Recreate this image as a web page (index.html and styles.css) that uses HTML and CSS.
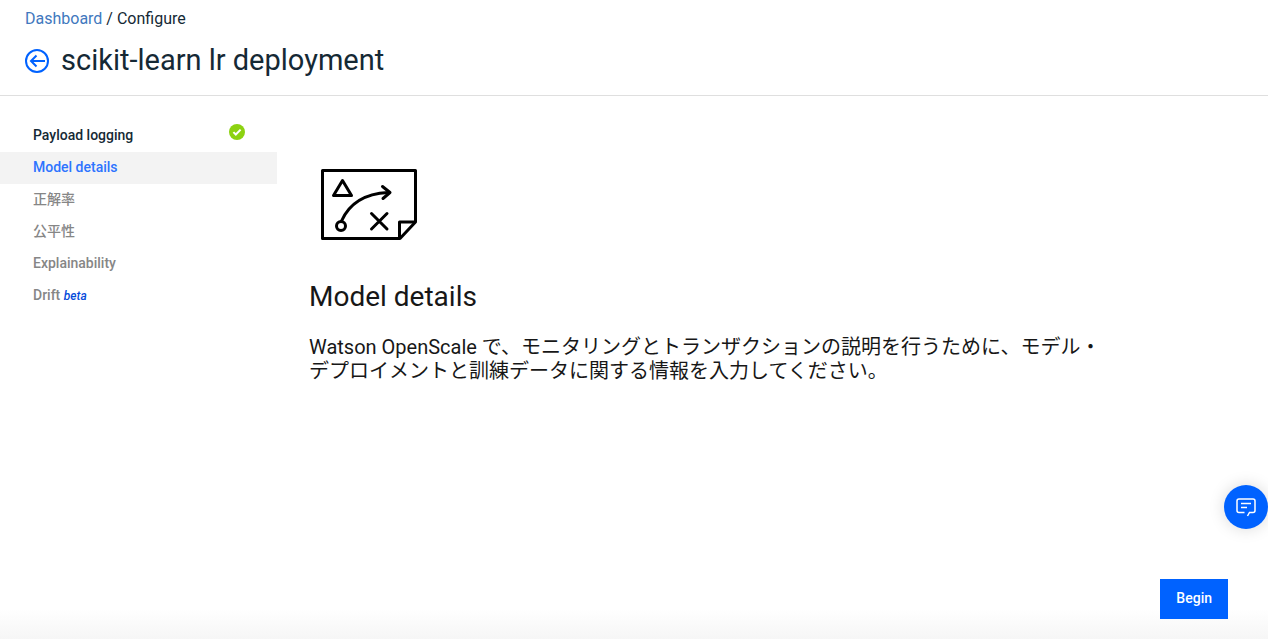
FILE: index.html
```html
<!DOCTYPE html>
<html lang="ja">
<head>
    <meta charset="UTF-8">
    <meta name="viewport" content="width=device-width, initial-scale=1.0">
    <link rel="stylesheet" href="styles.css">
    <title>Configure</title>
</head>
<body>
    <header class="page-header">
        <nav class="breadcrumb" aria-label="Breadcrumb">
            <a href="#">Dashboard</a> / <span>Configure</span>
        </nav>
        <div class="title-row">
            <a href="#" class="back" aria-label="Back">
                <svg width="24" height="24" viewBox="0 0 24 24" fill="none" stroke="#0062ff" stroke-width="2">
                    <circle cx="12" cy="12" r="11"/>
                    <path d="M20 12H6M11.5 6.5L6 12l5.5 5.5"/>
                </svg>
            </a>
            <h1>scikit-learn lr deployment</h1>
        </div>
    </header>

    <div class="content">
        <!-- Configuration steps -->
        <nav class="steps" aria-label="Steps">
            <ul>
                <li class="done">
                    <a href="#">Payload logging</a>
                    <svg class="check" width="16" height="16" viewBox="0 0 16 16">
                        <circle cx="8" cy="8" r="8" fill="#8cd211"/>
                        <path d="M4.4 8.1l2.4 2.4 4.8-4.9" fill="none" stroke="#fff" stroke-width="2"/>
                    </svg>
                </li>
                <li class="active"><a href="#">Model details</a></li>
                <li><a href="#">正解率</a></li>
                <li><a href="#">公平性</a></li>
                <li><a href="#">Explainability</a></li>
                <li><a href="#">Drift <em>beta</em></a></li>
            </ul>
        </nav>

        <main class="details">
            <svg class="plan" width="96" height="72" viewBox="0 0 96 72" fill="none" stroke="#000" stroke-width="3" stroke-linejoin="round">
                <path d="M1.5 1.5h93V53L79 69.500H1.500z"/>
                <path d="M94.500 53H78.500v16.500"/>
                <path d="M21.500 11.500l-9 15h18z"/>
                <circle cx="20" cy="57" r="4.500"/>
                <path d="M20.500 52C29 33 46 24.500 67 23.500" stroke-linecap="round"/>
                <path d="M61.500 17.500l7.500 6-7 6" stroke-linecap="round"/>
                <path d="M50.500 44.500l15.500 15.500M66 44.500L50.500 60" stroke-linecap="round"/>
            </svg>
            <h2>Model details</h2>
            <p>Watson OpenScale で、モニタリングとトランザクションの説明を行うために、モデル・デプロイメントと訓練データに関する情報を入力してください。</p>
        </main>
    </div>

    <footer class="actions">
        <button type="button" class="begin">Begin</button>
    </footer>

    <button type="button" class="chat" aria-label="Chat">
        <svg width="20" height="20" viewBox="0 0 20 20" fill="none" stroke="#fff" stroke-width="1.500">
            <path d="M8.500 15.500H3a2 2 0 0 1-2-2V4a2 2 0 0 1 2-2h14a2 2 0 0 1 2 2v9.500a2 2 0 0 1-2 2h-3.500L11.500 19"/>
            <path d="M5 6.500h10M5 10.500h6"/>
        </svg>
    </button>
</body>
</html>
```
FILE: styles.css
```css
* {
    box-sizing: border-box;
}

body {
    display: flex;
    flex-direction: column;
    min-height: 100vh;
    margin: 0;
    font-family: Roboto, "Noto Sans CJK JP", sans-serif;
    color: #152935;
    background-color: #fff;
}

a {
    color: inherit;
    text-decoration: none;
}

.page-header {
    padding: 9px 25px 17px;
    border-bottom: 1px solid #dfdfdf;
}

.breadcrumb {
    font-size: 16px;
    line-height: 20px;
}

.breadcrumb a {
    color: #4178be;
}

.title-row {
    display: flex;
    align-items: center;
    gap: 12px;
    margin-top: 13px;
}

.back {
    height: 24px;
    margin-top: 2px;
}

h1, h2 {
    margin: 0;
    font-weight: 400;
    line-height: 36px;
}

h1 {
    font-size: 29px;
}

h2 {
    font-size: 28px;
}

.content {
    display: flex;
    flex: 1;
    gap: 32px;
}

.steps {
    width: 277px;
    flex-shrink: 0;
}

.steps ul {
    list-style-type: none;
    margin: 0;
    padding: 24px 0 0;
}

.steps li {
    display: flex;
    justify-content: space-between;
    height: 32px;
    padding: 0 32px 0 33px;
    font-size: 14px;
    font-weight: 500;
    line-height: 30px;
    color: #868686;
}

.steps .done {
    color: #152935;
}

.steps .active {
    color: #2d74ff;
    background-color: #f3f3f3;
}

.steps em {
    font-size: 12px;
    color: #054ada;
}

.check {
    margin-top: 4px;
}

.details {
    max-width: 800px;
    padding-top: 73px;
    color: #171717;
}

.plan {
    display: block;
    margin: 0 0 38px 12px;
}

.details p {
    margin: 20px 0 0;
    font-size: 20px;
    line-height: 24px;
}

.actions {
    display: flex;
    justify-content: flex-end;
    padding: 20px 40px;
    background: linear-gradient(to top, #f6f6f6, #fff 30px);
}

.begin {
    height: 40px;
    padding: 0 16px 2px;
    border: none;
    font-family: inherit;
    font-size: 14px;
    font-weight: 500;
    color: #fff;
    background-color: #0062ff;
    cursor: pointer;
}

/* Floating chat launcher */
.chat {
    position: fixed;
    right: 0;
    bottom: 110px;
    display: flex;
    align-items: center;
    justify-content: center;
    width: 44px;
    height: 44px;
    padding: 0;
    border: none;
    border-radius: 50%;
    background-color: #0062ff;
    box-shadow: 0 0 16px rgba(0, 0, 0, 0.15);
    cursor: pointer;
}
```
